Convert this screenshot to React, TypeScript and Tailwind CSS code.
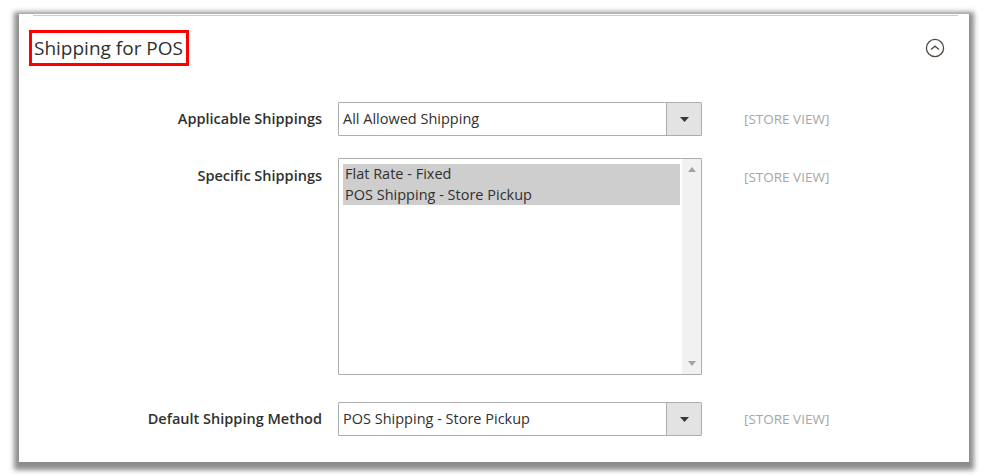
import React from 'react';

const font = { fontFamily: '"Open Sans", "Liberation Sans", sans-serif' };

function ScopeLabel() {
  return <span className="text-[13.5px] text-[#a6a6a6]">[STORE VIEW]</span>;
}

function SelectBox({ value }: { value: string }) {
  return (
    <div className="w-[364px] h-[34px] border border-[#adadad] rounded-[1px] flex bg-white">
      <div className="flex-1 flex items-center pl-[4px] text-[14.5px] text-[#303030]">{value}</div>
      <div className="w-[35px] border-l border-[#adadad] bg-[#e3e3e3] flex items-center justify-center">
        <svg width="9" height="5" viewBox="0 0 9 5">
          <path d="M0 0 L9 0 L4.5 5 Z" fill="#41362f" />
        </svg>
      </div>
    </div>
  );
}

export default function App() {
  const options = ['Flat Rate - Fixed', 'POS Shipping - Store Pickup'];

  return (
    <div className="w-[988px] h-[476px] bg-white pt-[14px] pl-[19px]" style={font}>
      <div className="w-[950px] h-[448px] bg-white shadow-[0_3px_5px_5px_rgba(0,0,0,0.45)]">
        {/* top divider */}
        <div className="pt-[1px] pl-[14px] pr-[11px]">
          <div className="h-px bg-[#cccccc]" />
        </div>

        {/* section header */}
        <div className="flex items-center justify-between pl-[10px] pr-[24px] mt-[14px]">
          <div className="w-[160px] h-[36px] border-[3px] border-[#ff0000] flex items-center pl-[2px]">
            <span className="text-[19px] text-[#303030] leading-none">Shipping for POS</span>
          </div>
          <svg width="20" height="20" viewBox="0 0 20 20">
            <circle cx="10" cy="10" r="8.6" fill="none" stroke="#514943" strokeWidth="1.3" />
            <path d="M6 11.6 L10 8.2 L14 11.6" fill="none" stroke="#514943" strokeWidth="1.3" />
          </svg>
        </div>

        {/* form */}
        <div className="mt-[36px] flex flex-col text-[14.5px] text-[#303030]">
          <div className="flex items-center">
            <div className="w-[303px] text-right font-semibold">Applicable Shippings</div>
            <div className="ml-[16px]">
              <SelectBox value="All Allowed Shipping" />
            </div>
            <div className="ml-[42px]">
              <ScopeLabel />
            </div>
          </div>

          <div className="flex items-start mt-[22px]">
            <div className="w-[303px] text-right font-semibold pt-[7px]">Specific Shippings</div>
            <div className="ml-[16px] w-[364px] h-[217px] border border-[#adadad] rounded-[1px] bg-white flex">
              <div className="flex-1 pt-[5px] pl-[4px] pr-[2px]">
                {options.map((o) => (
                  <div key={o} className="h-[20.5px] bg-[#cecece] flex items-center pl-[2px] leading-none">
                    {o}
                  </div>
                ))}
              </div>
              <div className="w-[19px] bg-[#f1f1f1] flex flex-col items-center justify-between py-[8px]">
                <svg width="8" height="5" viewBox="0 0 8 5">
                  <path d="M0 5 L8 5 L4 0 Z" fill="#a3a3a3" />
                </svg>
                <svg width="8" height="5" viewBox="0 0 8 5">
                  <path d="M0 0 L8 0 L4 5 Z" fill="#a3a3a3" />
                </svg>
              </div>
            </div>
            <div className="ml-[42px] pt-[8px]">
              <ScopeLabel />
            </div>
          </div>

          <div className="flex items-center mt-[27px]">
            <div className="w-[303px] text-right font-semibold">Default Shipping Method</div>
            <div className="ml-[16px]">
              <SelectBox value="POS Shipping - Store Pickup" />
            </div>
            <div className="ml-[42px]">
              <ScopeLabel />
            </div>
          </div>
        </div>
      </div>
    </div>
  );
}
